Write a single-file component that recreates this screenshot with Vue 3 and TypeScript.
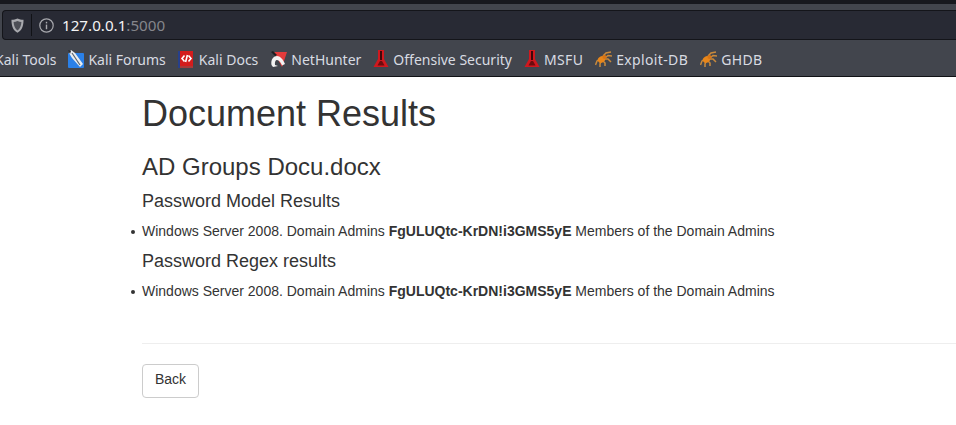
<script setup lang="ts">
const results = [
  { title: 'Password Model Results' },
  { title: 'Password Regex results' },
]
</script>

<template>
  <div class="page">
    <header class="chrome">
      <div class="strip"></div>
      <div class="navbar">
        <div class="urlbar">
          <span class="shield-box">
            <svg width="13" height="15" viewBox="0 0 14 15" preserveAspectRatio="none">
              <path d="M7 .5 C9 1.5 11 1.8 13.5 1.8 C13.5 8.5 11.5 12.5 7 14.8 C2.5 12.5 .5 8.5 .5 1.8 C3 1.8 5 1.5 7 .5Z" fill="#a8a9ae"/>
              <path d="M7 3 C8.5 3.6 9.8 3.9 11.2 4 C11 8 9.6 10.8 7 12.4 C4.4 10.8 3 8 2.8 4 C4.2 3.9 5.5 3.6 7 3Z" fill="#4c4e56"/>
            </svg>
          </span>
          <span class="info">
            <svg width="15" height="15" viewBox="0 0 15 15">
              <circle cx="7.5" cy="7.5" r="6.7" fill="none" stroke="#a8a9ae" stroke-width="1.2"/>
              <rect x="6.8" y="6.6" width="1.4" height="4.6" fill="#a8a9ae"/>
              <rect x="6.8" y="3.8" width="1.4" height="1.6" fill="#a8a9ae"/>
            </svg>
          </span>
          <span class="url">127.0.0.1<span class="port">:5000</span></span>
        </div>
      </div>
      <nav class="bookmarks">
        <span class="mark cut">Kali Tools</span>
        <span class="mark">
          <svg width="16" height="18" viewBox="0 0 16 18">
            <rect x="0" y="3" width="16" height="15" rx="1" fill="#2a80e8"/>
            <path d="M1 3 L3 0 L7 3 L15 14 L12 17 L4 8Z" fill="#e9edf2"/>
            <path d="M4 3 L12 15" stroke="#59636e" stroke-width="1.2"/>
            <path d="M0 0 L3 1 L2 4Z" fill="#2b2d33"/>
          </svg>
          Kali Forums
        </span>
        <span class="mark">
          <svg width="17" height="17" viewBox="0 0 17 17">
            <rect x="0" y="0" width="2" height="17" fill="#27408b"/>
            <rect x="2" y="0" width="13" height="15" fill="#d41c1c"/>
            <rect x="2" y="15" width="13" height="2" fill="#a83a3a"/>
            <path d="M6.5 4.5 L4 7.5 L6.5 10.5 M10.5 4.5 L13 7.5 L10.5 10.5 M9.4 4 L7.6 11" fill="none" stroke="#fff" stroke-width="1.6"/>
          </svg>
          Kali Docs
        </span>
        <span class="mark">
          <svg width="17" height="17" viewBox="0 0 17 17">
            <path d="M4 1 H17 L12 16 Z" fill="#e23b3b"/>
            <path d="M1.5 14 C.5 8 4 5 7 5 C10 5 13 8 15 13 L12 14.5 C11 11.5 9 9 7 9 C5.5 9 4.5 11 5 14 L8 15 L3 16Z" fill="#f2f2f2"/>
            <path d="M1 1 L3 0 L7 4 L5 5Z" fill="#1d1e22"/>
          </svg>
          NetHunter
        </span>
        <span class="mark">
          <svg width="16" height="18" viewBox="0 0 16 18">
            <path d="M5 0 H11 V9 L15.5 17 H.5 L5 9Z" fill="#d0181e"/>
            <path d="M7 1 H9 V10 H7Z" fill="#3e080a"/>
            <path d="M4.5 15.5 L7 11 H9 L11.5 15.5Z" fill="#6e0b0e"/>
          </svg>
          Offensive Security
        </span>
        <span class="mark wide">
          <svg width="16" height="18" viewBox="0 0 16 18">
            <path d="M5 0 H11 V9 L15.5 17 H.5 L5 9Z" fill="#d0181e"/>
            <path d="M7 1 H9 V10 H7Z" fill="#3e080a"/>
            <path d="M4.5 15.5 L7 11 H9 L11.5 15.5Z" fill="#6e0b0e"/>
          </svg>
          MSFU
        </span>
        <span class="mark wide">
          <svg width="17" height="16" viewBox="0 0 17 16">
            <g fill="none" stroke="#c98a3c" stroke-width="1.5">
              <path d="M8 5 L11 2 L16 1"/><path d="M10 7 L13 4.5 L17 5"/><path d="M9 8 L13 8 L16 11"/>
              <path d="M5 8 L2 10 L0.5 14"/><path d="M6 10 L5 13 L5 16"/><path d="M8 10 L10 12 L10 15"/>
            </g>
            <ellipse cx="6.5" cy="8.5" rx="3.8" ry="3.2" transform="rotate(-35 6.5 8.5)" fill="#e8861a"/>
            <circle cx="9.5" cy="6" r="2" fill="#d87414"/>
          </svg>
          Exploit-DB
        </span>
        <span class="mark wide">
          <svg width="17" height="16" viewBox="0 0 17 16">
            <g fill="none" stroke="#c98a3c" stroke-width="1.5">
              <path d="M8 5 L11 2 L16 1"/><path d="M10 7 L13 4.5 L17 5"/><path d="M9 8 L13 8 L16 11"/>
              <path d="M5 8 L2 10 L0.5 14"/><path d="M6 10 L5 13 L5 16"/><path d="M8 10 L10 12 L10 15"/>
            </g>
            <ellipse cx="6.5" cy="8.5" rx="3.8" ry="3.2" transform="rotate(-35 6.5 8.5)" fill="#e8861a"/>
            <circle cx="9.5" cy="6" r="2" fill="#d87414"/>
          </svg>
          GHDB
        </span>
      </nav>
    </header>

    <main class="content">
      <h1>Document Results</h1>
      <h3>AD Groups Docu.docx</h3>
      <section v-for="r in results" :key="r.title">
        <h4>{{ r.title }}</h4>
        <ul>
          <li>Windows Server 2008. Domain Admins <b>FgULUQtc-KrDN!i3GMS5yE</b> Members of the Domain Admins</li>
        </ul>
      </section>
      <hr />
      <a class="btn">Back</a>
    </main>
  </div>
</template>

<style>
html, body { margin: 0; background: #fff; overflow: hidden; }
</style>

<style scoped>
.page { width: 956px; height: 425px; overflow: hidden; }
.chrome { background: #42454d; height: 77px; box-sizing: border-box; border-bottom: 1px solid #111216; display: flex; flex-direction: column; }
.strip { height: 4px; background: #17181e; flex: none; }
.navbar { height: 36px; box-sizing: border-box; padding-top: 6px; flex: none; }
.urlbar { margin-left: 2px; height: 30px; box-sizing: border-box; background: #282a34; border: 1px solid #14151a; border-right: 0; border-radius: 4px 0 0 4px; display: flex; align-items: center; }
.shield-box { width: 29px; height: 22px; border-right: 1px solid #111216; display: flex; align-items: center; justify-content: center; box-sizing: border-box; }
.info { margin-left: 7px; display: flex; }
.url { margin-left: 8px; font: 15.2px "Noto Sans", sans-serif; color: #f4f4f5; }
.port { color: #85868b; }
.bookmarks { flex: 1; display: flex; align-items: center; gap: 12px; margin-left: -5px; padding-top: 2px; font: 14px "Noto Sans", sans-serif; color: #d8dbe2; white-space: nowrap; }
.mark { display: inline-flex; align-items: center; gap: 4px; }
.mark.wide { letter-spacing: .35px; }
.content { padding-left: 142px; font-family: "Liberation Sans", sans-serif; font-size: 14px; line-height: 20px; color: #333; }
h1 { margin: 17px 0 10px; font-size: 36px; font-weight: 500; line-height: 40px; }
h3 { margin: 20px 0 11px; font-size: 24px; font-weight: 500; line-height: 26px; }
h4 { margin: 10px 0; font-size: 18px; font-weight: 500; line-height: 20px; }
ul { margin: 0 0 10px; padding: 0; list-style: none; }
li { margin: 0; position: relative; }
li::before { content: ""; position: absolute; left: -11px; top: 9px; width: 4px; height: 4px; border-radius: 50%; background: #333; }
hr { margin: 42px 0 20px; border: 0; border-top: 1px solid #eee; }
.btn { display: inline-block; padding: 4px 12px 8px; border: 1px solid #ccc; border-radius: 4px; background: #fff; color: #333; }
</style>
